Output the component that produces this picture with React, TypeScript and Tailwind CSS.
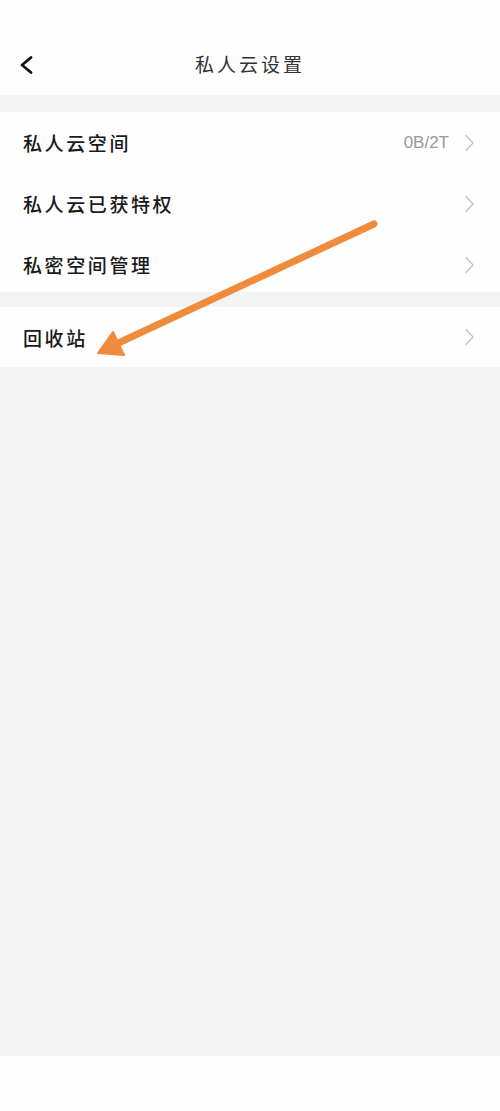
import React from "react";

const font = { fontFamily: '"Noto Sans CJK SC", "Noto Sans", sans-serif' };

function Chevron() {
  return (
    <svg width="12" height="18" viewBox="0 0 12 18" className="shrink-0">
      <path d="M4 1.5 L11 9 L4 16.5" fill="none" stroke="#c4c4c4" strokeWidth="1.4" strokeLinecap="round" strokeLinejoin="round" />
    </svg>
  );
}

function Row({ label, value, h = "h-[61px]", pt = "pt-[1px]" }: { label: string; value?: string; h?: string; pt?: string }) {
  return (
    <div className={`flex ${h} shrink-0 items-center justify-between pl-[23px] pr-[26px]`}>
      <span className={`text-[19px] font-medium tracking-[2.6px] text-[#1a1a1a] ${pt}`}>{label}</span>
      <div className="flex items-center gap-[13px]">
        {value && <span className={`text-[17px] text-[#9a9a9a] ${pt}`} style={{ fontFamily: '"Liberation Sans", Arial, sans-serif' }}>{value}</span>}
        <Chevron />
      </div>
    </div>
  );
}

export default function App() {
  return (
    <div className="relative flex h-[1111px] w-[500px] flex-col bg-[#f3f3f3]" style={font}>
      <div className="relative flex h-[95px] shrink-0 items-end justify-center bg-[#fefefe] pb-[17px]">
        <svg width="16" height="20" viewBox="0 0 16 20" className="absolute left-[18px] top-[55px]">
          <path d="M13 2.5 L4 10 L13 17.5" fill="none" stroke="#111" strokeWidth="2.8" strokeLinecap="round" strokeLinejoin="round" />
        </svg>
        <span className="text-[19px] tracking-[3px] text-[#333]">私人云设置</span>
      </div>
      <div className="h-[17px] shrink-0" />
      <div className="flex h-[180px] shrink-0 flex-col overflow-hidden bg-[#fefefe]">
        <Row label="私人云空间" value="0B/2T" />
        <Row label="私人云已获特权" />
        <Row label="私密空间管理" />
      </div>
      <div className="h-[15px] shrink-0" />
      <div className="bg-[#fefefe]">
        <Row label="回收站" h="h-[60px]" pt="pt-[3px]" />
      </div>
      <div className="flex-1" />
      <div className="h-[55px] shrink-0 bg-[#fdfdfd]" />
      <svg className="pointer-events-none absolute left-0 top-0" width="500" height="1111" viewBox="0 0 500 1111">
        <line x1="374" y1="224" x2="114" y2="345" stroke="#f08b3b" strokeWidth="7" strokeLinecap="round" />
        <polygon points="98,353 113,332 124,355" fill="#f08b3b" stroke="#f08b3b" strokeWidth="2" strokeLinejoin="round" />
      </svg>
    </div>
  );
}
